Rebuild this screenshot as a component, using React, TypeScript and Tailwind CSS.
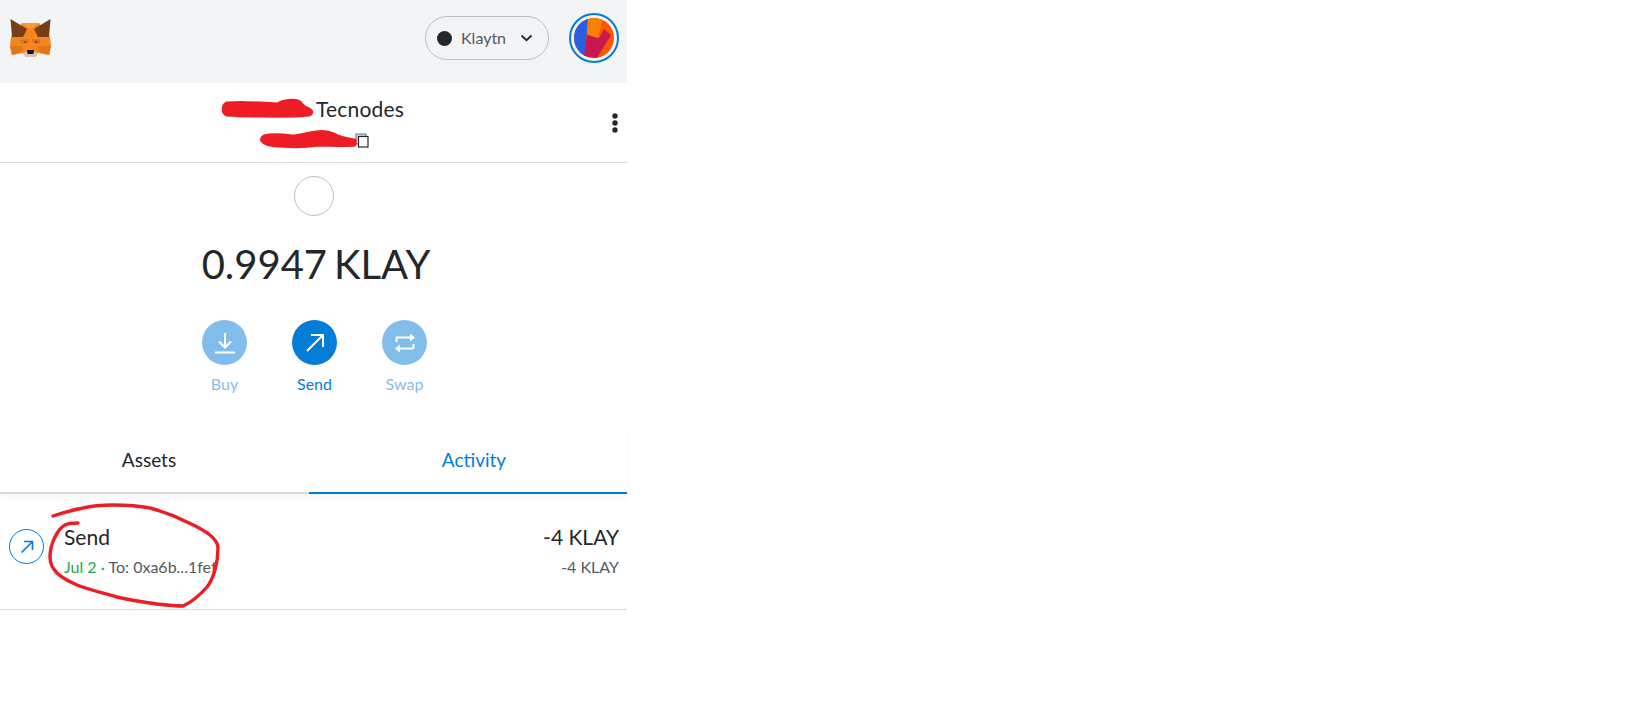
const Fox = () => (
  <svg width="41" height="38" viewBox="0 0 41 38">
    <polygon points="12,4 29,4 40,18 41,27 39,36 28,34 25,38 16,38 13,34 2,36 0,27 1,18" fill="#f6851b" />
    <polygon points="12,4 20.5,10 29,4" fill="#fb9a3c" />
    <polygon points="0.5,0 17,10 13,18 2,18" fill="#763d16" />
    <polygon points="40.5,0 24,10 28,18 39,18" fill="#763d16" />
    <polygon points="0,27 13,27 12,33 2,36" fill="#e2761b" />
    <polygon points="41,27 28,27 29,33 39,36" fill="#e2761b" />
    <polygon points="10,21 19,20 18,24 12,25" fill="#d9712a" />
    <polygon points="31,21 22,20 23,24 29,25" fill="#d9712a" />
    <circle cx="15" cy="23" r="1" fill="#763d16" />
    <circle cx="26" cy="23" r="1" fill="#763d16" />
    <polygon points="13,34 20.5,31 28,34 25,38 16,38" fill="#d7c1b3" />
    <polygon points="17,31 24,31 23.5,35 17.5,35" fill="#161616" />
  </svg>
);

const Avatar = () => (
  <div className="w-[50px] h-[50px] rounded-full border-2 border-[#037dd6] flex items-center justify-center">
    <svg width="40" height="40" viewBox="0 0 40 40" className="rounded-full">
      <rect width="40" height="40" fill="#fa5700" />
      <polygon points="0,0 14,0 11,36 12,40 0,40" fill="#2b5fe3" />
      <polygon points="13,17 25,20 30,11 37,17 23,40 10,38" fill="#c9184e" />
      <polygon points="14,0 29,0 24,20 13,16" fill="#fb7f00" />
    </svg>
  </div>
);

const ActionButton = ({ label, active, children }: { label: string; active?: boolean; children: React.ReactNode }) => (
  <div className={`w-[45px] flex flex-col items-center ${active ? "" : "opacity-50"}`}>
    <div className="w-[45px] h-[45px] rounded-full bg-[#037dd6] flex items-center justify-center">{children}</div>
    <span className="mt-[8px] text-[16px] leading-[22px] text-[#037dd6]">{label}</span>
  </div>
);

export default function App() {
  return (
    <div className="w-[627px] h-[701px] bg-white text-[#24272a] font-['Lato','Liberation_Sans',sans-serif]">
      <header className="h-[83px] bg-[#f2f4f6] flex items-start pl-[10px] pr-2 pt-[13px]">
        <div className="mt-[6px]">
          <Fox />
        </div>
        <div className="ml-auto mt-[3px] h-[44px] w-[124px] rounded-full border border-[#bbc0c5] flex items-center pl-[11px]">
          <span className="w-[15px] h-[15px] rounded-full bg-[#24272a]" />
          <span className="ml-[9px] text-[16px] text-[#535a61]">Klaytn</span>
          <svg className="ml-[14px]" width="13" height="8" viewBox="0 0 13 8" fill="none">
            <path d="M1.5 1.5 6.5 6.2 11.5 1.5" stroke="#24272a" strokeWidth="1.8" />
          </svg>
        </div>
        <div className="ml-5">
          <Avatar />
        </div>
      </header>

      <div className="relative h-[80px] border-b border-[#d6d9dc] flex flex-col items-center">
        <div className="mt-[13px] text-[21px] leading-[26px] flex">
          <span className="w-[93px]" />
          <span className="tracking-[0.2px]">Tecnodes</span>
        </div>
        <div className="mt-[8px] h-[20px] w-[110px] flex items-center justify-end">
          <svg width="14" height="15" viewBox="0 0 14 15" fill="none">
            <rect x="1" y="1" width="10" height="10" fill="#d6d9dc" stroke="#6a737d" />
            <rect x="3.5" y="3.5" width="9.5" height="10.5" fill="#fff" stroke="#24272a" strokeWidth="1.2" />
          </svg>
        </div>
        <svg className="absolute right-[7px] top-[30px]" width="10" height="20" viewBox="0 0 10 20" fill="#24272a">
          <circle cx="5" cy="3" r="2.7" />
          <circle cx="5" cy="10" r="2.7" />
          <circle cx="5" cy="17" r="2.7" />
        </svg>
        {/* red marker over the account name and address */}
        <svg className="absolute left-0 top-0 pointer-events-none" width="400" height="80" viewBox="0 83 400 80" fill="#ee1c25" stroke="#ee1c25" strokeWidth="3" strokeLinejoin="round">
          <path d="M227 103 C240 102 262 103 278 104 C282 100 296 99 300 102 C302 105 306 108 309 109 C313 111 312 114 309 115 C290 117 240 116 227 115 C222 113 222 105 227 103Z" />
          <path d="M264 136 C272 134 284 135 292 136 C298 136 304 134 310 133 C318 131 328 131 334 134 C340 138 348 139 355 140 L355 145 C345 146 330 145 318 145 C305 147 290 147 280 146 C270 146 264 144 262 141 C261 139 262 137 264 136Z" />
        </svg>
      </div>

      <section className="flex flex-col items-center">
        <div className="mt-[13px] w-10 h-10 rounded-full border border-[#bbc0c5]" />
        <div className="mt-[22px] pl-[5px] text-[40px] leading-[52px] font-normal">
          0.9947<span className="ml-[7px]">KLAY</span>
        </div>
        <div className="mt-[30px] pl-[2px] flex gap-[45px]">
          <ActionButton label="Buy">
            <svg width="24" height="24" viewBox="0 0 24 24" fill="none" stroke="#fff" strokeWidth="2">
              <path d="M12 2v14M6 10.5l6 6 6-6M2 21.5h20" />
            </svg>
          </ActionButton>
          <ActionButton label="Send" active>
            <svg width="22" height="22" viewBox="0 0 22 22" fill="none" stroke="#fff" strokeWidth="2">
              <path d="M3 19 18 4M7 3h12v12" />
            </svg>
          </ActionButton>
          <ActionButton label="Swap">
            <svg width="24" height="24" viewBox="0 0 24 24" fill="none" stroke="#fff" strokeWidth="2">
              <path d="M3.5 11V6.5H19M20.5 17.5H5M20.5 13v4.5" />
              <path d="M17 2.5 22 6.5 17 10.5Z M7 13.5 2 17.5 7 21.5Z" fill="#fff" stroke="none" />
            </svg>
          </ActionButton>
        </div>
      </section>

      <nav className="mt-[36px] h-[63px] flex shadow-[0_4px_6px_rgba(0,0,0,0.04)]">
        <div className="w-[309px] border-b-2 border-[#d6d9dc] flex items-center justify-center pb-[3px] pr-[11px] text-[19px]">Assets</div>
        <div className="flex-1 border-b-2 border-[#037dd6] flex items-center justify-center pb-[3px] pl-[12px] text-[19px] text-[#037dd6]">Activity</div>
      </nav>

      <div className="relative h-[116px] border-b border-[#d6d9dc] flex pl-[9px] pr-2 pt-[35px]">
        <div className="w-[35px] h-[35px] rounded-full border border-[#037dd6] flex items-center justify-center">
          <svg width="16" height="16" viewBox="0 0 16 16" fill="none" stroke="#037dd6" strokeWidth="1.6">
            <path d="M2.5 13.5 13 3M5 2.5h8.5V11" />
          </svg>
        </div>
        <div className="ml-[20px] -mt-[5px]">
          <div className="text-[21px] leading-[26px]">Send</div>
          <div className="mt-[7px] text-[16px] leading-[20px] text-[#535a61]">
            <span className="text-[#28a745]">Jul 2</span>
            <span className="text-[#28a745]"> · </span>
            To: 0xa6b...1fef
          </div>
        </div>
        <div className="ml-auto -mt-[5px] text-right">
          <div className="text-[21px] leading-[26px]">-4 KLAY</div>
          <div className="mt-[7px] text-[16px] leading-[20px] text-[#535a61]">-4 KLAY</div>
        </div>
        {/* hand drawn circle around the transaction */}
        <svg className="absolute left-0 top-0 pointer-events-none" width="240" height="116" viewBox="0 494 240 116" fill="none">
          <path d="M53 516 C62 513 72 510 83 508 C95 505 105 505 113 505 C128 505 140 506 150 508 C165 512 177 517 187 522 C198 527 205 531 210 535 C216 540 218 544 218 548 C218 556 217 563 215 570 C213 577 211 582 207 587 C200 595 192 602 183 606 C175 606 166 605 157 604 C143 602 130 600 117 597 C103 593 90 590 77 585 C68 581 62 578 57 573 C52 568 50 563 50 557 C50 550 52 543 55 537 C58 531 61 527 65 525 C69 523 74 523 78 523" stroke="#ee1c25" strokeWidth="3.4" strokeLinecap="round" />
        </svg>
      </div>
    </div>
  );
}
